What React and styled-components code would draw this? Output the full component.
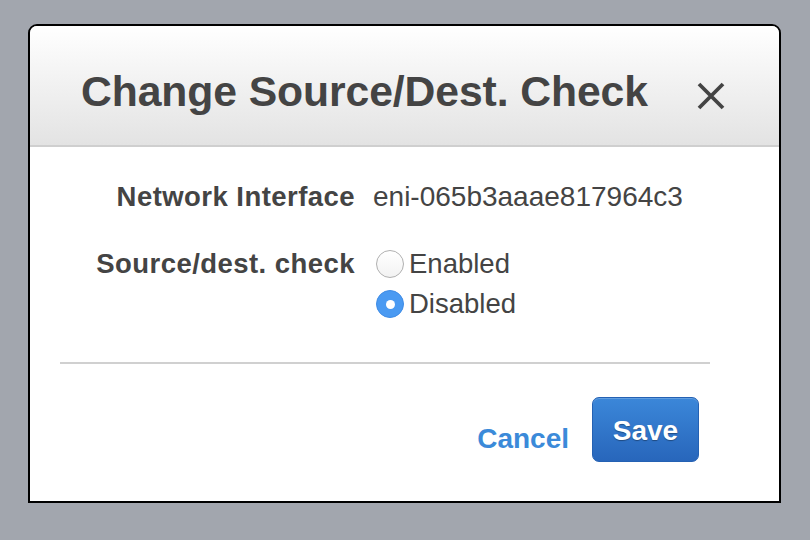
import React, { useState } from 'react';
import styled, { createGlobalStyle } from 'styled-components';

const Global = createGlobalStyle`
  html, body {
    margin: 0;
    padding: 0;
    width: 810px;
    height: 540px;
    background: #a2a6ae;
    overflow: hidden;
  }
  body {
    font-family: "Liberation Sans", Arial, sans-serif;
  }
`;

const Page = styled.div`
  padding: 24px 0 0 28px;
`;

const Modal = styled.div`
  width: 749px;
  height: 475px;
  background: #fff;
  border: 2px solid #000;
  border-radius: 9px 9px 0 0;
  overflow: hidden;
  display: flex;
  flex-direction: column;
`;

const Header = styled.div`
  height: 121px;
  box-sizing: border-box;
  background: linear-gradient(#ffffff, #e3e3e3);
  border-bottom: 2px solid #cfcfcf;
  display: flex;
  align-items: center;
  padding: 11px 54px 0 51px;
  justify-content: space-between;
  flex-shrink: 0;
`;

const Title = styled.h1`
  margin: 0;
  font-size: 42.7px;
  font-weight: bold;
  color: #444;
  letter-spacing: -0.1px;
`;

const Close = styled.button`
  border: none;
  background: none;
  padding: 0;
  width: 28px;
  height: 28px;
  cursor: pointer;
  margin-top: 9px;
`;

const Body = styled.div`
  padding: 34px 69px 0 30px;
`;

const Grid = styled.div`
  display: grid;
  grid-template-columns: 295px 1fr;
  column-gap: 18px;
  row-gap: 35px;
  padding-bottom: 42px;
  border-bottom: 2px solid #d0d0d0;
`;

const Label = styled.div`
  text-align: right;
  font-size: 27.5px;
  font-weight: bold;
  letter-spacing: 0.45px;
  color: #444;
  line-height: 32px;
  white-space: nowrap;
`;

const Value = styled.div`
  font-size: 28px;
  color: #444;
  line-height: 32px;
`;

const Radios = styled.div`
  display: flex;
  flex-direction: column;
  gap: 8px;
`;

const RadioRow = styled.label`
  display: flex;
  align-items: center;
  gap: 5px;
  font-size: 27.5px;
  color: #444;
  line-height: 32px;
  cursor: pointer;
  margin-left: 3px;
`;

const Dot = styled.span`
  width: 28px;
  height: 28px;
  border-radius: 50%;
  box-sizing: border-box;
  display: inline-flex;
  align-items: center;
  justify-content: center;
  background: ${p => (p.$on ? '#4a9af2' : 'linear-gradient(#fff, #f2f2f2)')};
  border: ${p => (p.$on ? '1px solid #3f8ce6' : '1px solid #b0b0b0')};
  &::after {
    content: '';
    display: ${p => (p.$on ? 'block' : 'none')};
    width: 9px;
    height: 9px;
    border-radius: 50%;
    background: #fff;
  }
`;

const Footer = styled.div`
  display: flex;
  justify-content: flex-end;
  align-items: center;
  gap: 23px;
  padding: 33px 11px 0 0;
`;

const LinkButton = styled.button`
  border: none;
  background: none;
  padding: 0;
  font-family: inherit;
  font-size: 28px;
  font-weight: bold;
  color: #3b8ad9;
  margin-top: 18px;
  cursor: pointer;
`;

const Primary = styled.button`
  width: 107px;
  height: 65px;
  border: 1px solid #2461b3;
  border-radius: 7px;
  background: linear-gradient(#3b87d9, #2866bb);
  color: #fff;
  font-family: inherit;
  font-size: 28px;
  font-weight: bold;
  text-shadow: 0 1px 1px rgba(0, 0, 0, 0.35);
  box-shadow: inset 0 1px 0 rgba(255, 255, 255, 0.2);
  cursor: pointer;
  padding: 2px 0 0;
`;

export default function App() {
  const [check, setCheck] = useState('disabled');
  return (
    <Page>
      <Global />
      <Modal>
        <Header>
          <Title>Change Source/Dest. Check</Title>
          <Close aria-label="close">
            <svg width="28" height="28" viewBox="0 0 28 28">
              <path d="M2 2 L26 26 M26 2 L2 26" stroke="#444" strokeWidth="3.8" />
            </svg>
          </Close>
        </Header>
        <Body>
          <Grid>
            <Label>Network Interface</Label>
            <Value>eni-065b3aaae817964c3</Value>
            <Label>Source/dest. check</Label>
            <Radios>
              <RadioRow onClick={() => setCheck('enabled')}>
                <Dot $on={check === 'enabled'} />
                Enabled
              </RadioRow>
              <RadioRow onClick={() => setCheck('disabled')}>
                <Dot $on={check === 'disabled'} />
                Disabled
              </RadioRow>
            </Radios>
          </Grid>
          <Footer>
            <LinkButton>Cancel</LinkButton>
            <Primary>Save</Primary>
          </Footer>
        </Body>
      </Modal>
    </Page>
  );
}
